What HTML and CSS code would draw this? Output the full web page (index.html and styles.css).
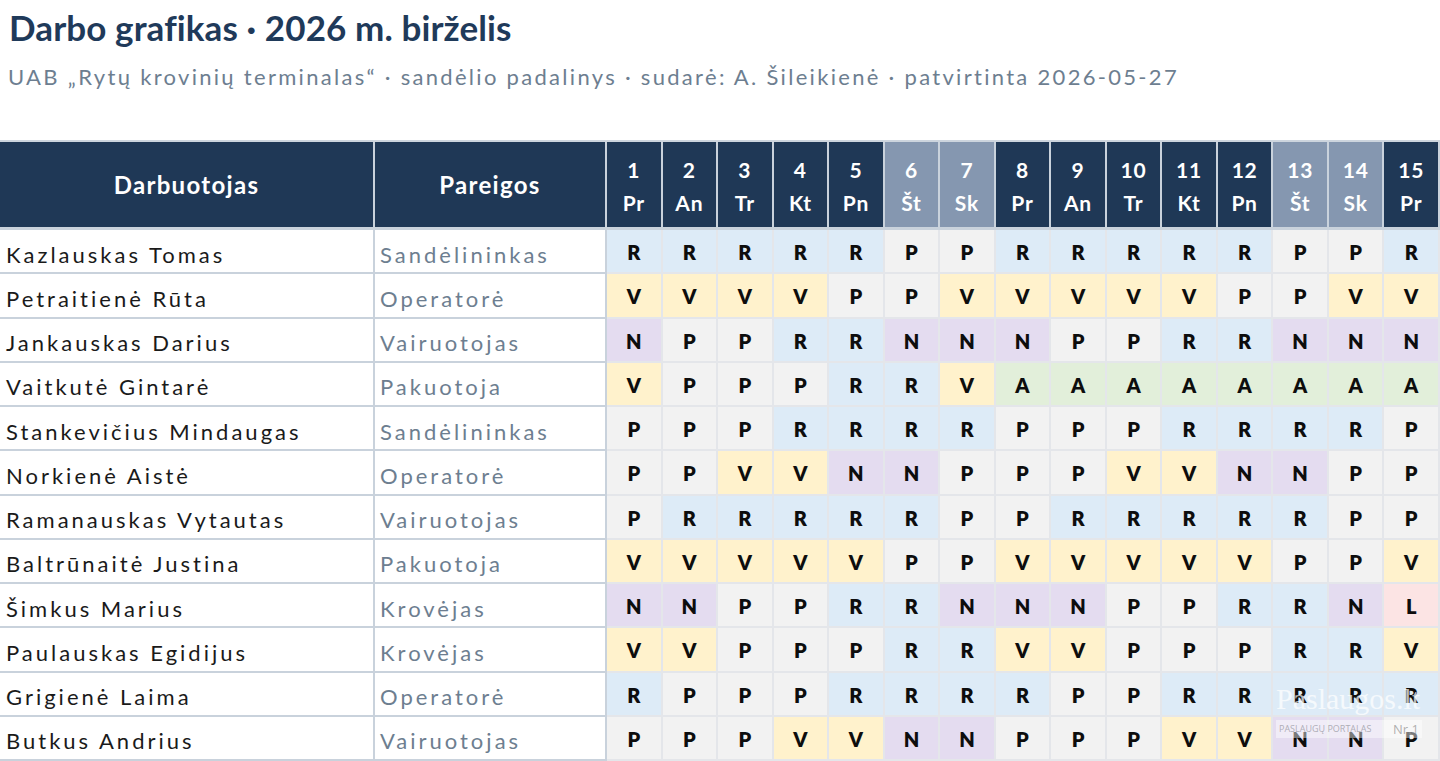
FILE: index.html
```html
<!DOCTYPE html>
<html lang="lt">
<head>
<meta charset="utf-8">
<title>Darbo grafikas · 2026 m. birželis</title>
<link rel="stylesheet" href="styles.css">
</head>
<body>
<div class="page">
  <header class="head">
    <h1 class="title">Darbo grafikas · 2026 m. birželis</h1>
    <p class="sub">UAB „Rytų krovinių terminalas“ · sandėlio padalinys · sudarė: A. Šileikienė · patvirtinta 2026-05-27</p>
  </header>
  <table class="grid">
    <colgroup>
      <col class="c-name"><col class="c-role">
      <col><col><col><col><col><col><col><col><col><col><col><col><col><col><col>
    </colgroup>
    <thead>
      <tr>
        <th class="h-main">Darbuotojas</th>
        <th class="h-main">Pareigos</th>
        <th class="h-day">1<br>Pr</th>
        <th class="h-day">2<br>An</th>
        <th class="h-day">3<br>Tr</th>
        <th class="h-day">4<br>Kt</th>
        <th class="h-day">5<br>Pn</th>
        <th class="h-day we">6<br>Št</th>
        <th class="h-day we">7<br>Sk</th>
        <th class="h-day">8<br>Pr</th>
        <th class="h-day">9<br>An</th>
        <th class="h-day">10<br>Tr</th>
        <th class="h-day">11<br>Kt</th>
        <th class="h-day">12<br>Pn</th>
        <th class="h-day we">13<br>Št</th>
        <th class="h-day we">14<br>Sk</th>
        <th class="h-day">15<br>Pr</th>
      </tr>
    </thead>
    <tbody id="rows"></tbody>
  </table>
  <div class="wm" aria-hidden="true">
    <div class="wm-logo">Paslaugos.lt</div>
    <div class="wm-tag"><span>PASLAUGŲ PORTALAS</span><span class="wm-nr">Nr.1</span></div>
  </div>
</div>
<script src="app.js"></script>
</body>
</html>
```

FILE: app.js
```js
const data = [
  ["Kazlauskas Tomas", "Sandėlininkas", "RRRRRPPRRRRRPPR"],
  ["Petraitienė Rūta", "Operatorė", "VVVVPPVVVVVPPVV"],
  ["Jankauskas Darius", "Vairuotojas", "NPPRRNNNPPRRNNN"],
  ["Vaitkutė Gintarė", "Pakuotoja", "VPPPRRVAAAAAAAA"],
  ["Stankevičius Mindaugas", "Sandėlininkas", "PPPRRRRPPPRRRRP"],
  ["Norkienė Aistė", "Operatorė", "PPVVNNPPPVVNNPP"],
  ["Ramanauskas Vytautas", "Vairuotojas", "PRRRRRPPRRRRRPP"],
  ["Baltrūnaitė Justina", "Pakuotoja", "VVVVVPPVVVVVPPV"],
  ["Šimkus Marius", "Krovėjas", "NNPPRRNNNPPRRNL"],
  ["Paulauskas Egidijus", "Krovėjas", "VVPPPRRVVPPPRRV"],
  ["Grigienė Laima", "Operatorė", "RPPPRRRRPPRRRRR"],
  ["Butkus Andrius", "Vairuotojas", "PPPVVNNPPPVVNNP"]
];
const tbody = document.getElementById("rows");
data.forEach(([name, role, codes]) => {
  const tr = document.createElement("tr");
  const n = document.createElement("td");
  n.className = "name";
  n.textContent = name;
  const r = document.createElement("td");
  r.className = "role";
  r.textContent = role;
  tr.append(n, r);
  for (const c of codes) {
    const td = document.createElement("td");
    td.className = "d s-" + c;
    td.textContent = c;
    tr.append(td);
  }
  tbody.append(tr);
});
```

FILE: styles.css
```css
html, body {
  margin: 0;
  padding: 0;
  background: #ffffff;
}
body {
  font-family: Lato, "Open Sans", "Liberation Sans", sans-serif;
  color: #111;
}
.page {
  position: relative;
  width: 1440px;
  height: 761px;
  overflow: hidden;
}
.head {
  height: 140px;
  box-sizing: border-box;
  padding: 6px 0 0 9px;
}
.title {
  margin: 0;
  font-size: 35px;
  line-height: 42px;
  font-weight: 700;
  color: #1f3a5a;
  letter-spacing: 0.1px;
}
.sub {
  margin: 14px 0 0 -1px;
  font-size: 22px;
  line-height: 30px;
  color: #6d7e90;
  letter-spacing: 2.3px;
  white-space: nowrap;
}
.grid {
  width: 1440px;
  table-layout: fixed;
  border-collapse: separate;
  border-spacing: 0;
  border-top: 2px solid #cdd5de;
}
.c-name { width: 375px; }
.c-role { width: 232px; }
th, td {
  padding: 0;
  box-sizing: border-box;
}
thead th {
  height: 88px;
  background: #1f3856;
  color: #ffffff;
  font-weight: 700;
  border-right: 2px solid #c9d2dc;
  border-bottom: 3px solid #c9d2dc;
  text-align: center;
  vertical-align: middle;
}
.h-main {
  font-size: 24px;
  letter-spacing: 1.3px;
}
.h-day {
  font-size: 21px;
  line-height: 33px;
  letter-spacing: 0.8px;
  padding-top: 2px;
}
.h-day.we {
  background: #8597b0;
}
td {
  height: 44.25px;
  vertical-align: middle;
  white-space: nowrap;
}
td.name, td.role {
  background: #fff;
  border-right: 2px solid #c9d2dc;
  border-bottom: 2px solid #c9d2dc;
  font-size: 22px;
  letter-spacing: 3px;
  padding: 6px 0 0 6px;
}
td.name { color: #1a1a1a; }
td.role { color: #6d7e90; padding-left: 5px; }
td.d {
  text-align: center;
  font-weight: 800;
  font-size: 20px;
  color: #0d0d0d;
  border-right: 2px solid #e4e6ea;
  border-bottom: 2px solid #e4e6ea;
  padding-top: 2px;
}
.s-R { background: #ddebf7; }
.s-P { background: #f2f2f2; }
.s-V { background: #fff2cc; }
.s-N { background: #e4dcf0; }
.s-A { background: #e2efda; }
.s-L { background: #fce4e4; }

.wm {
  position: absolute;
  left: 1276px;
  top: 682px;
  width: 146px;
  color: rgba(255, 255, 255, 0.72);
  pointer-events: none;
}
.wm-logo {
  font-family: "Liberation Serif", serif;
  font-size: 30px;
  line-height: 34px;
  white-space: nowrap;
}
.wm-tag {
  display: flex;
  align-items: center;
  justify-content: space-between;
  margin-top: 4px;
  padding: 1px 3px;
  background: rgba(255, 255, 255, 0.45);
  font-family: "Open Sans", sans-serif;
  font-size: 9px;
  line-height: 16px;
  white-space: nowrap;
  color: rgba(150, 150, 160, 0.75);
}
.wm-nr {
  font-size: 13px;
  color: rgba(150, 150, 150, 0.75);
}
```
